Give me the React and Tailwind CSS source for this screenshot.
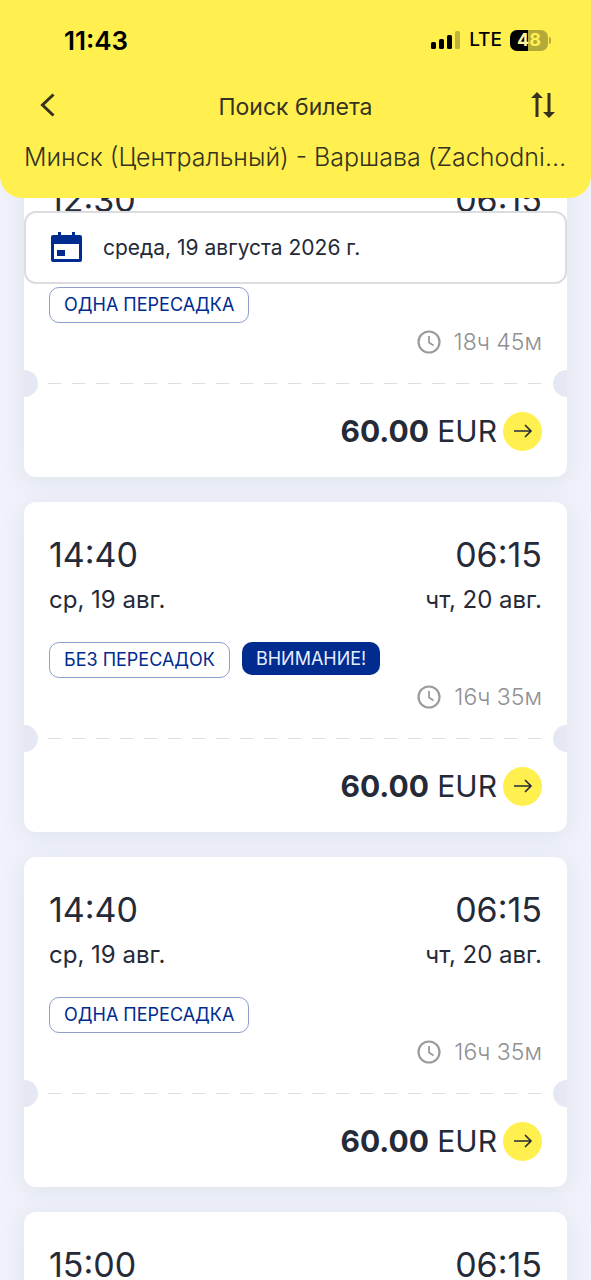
const TRIPS = [
  { id: 1, departure: '12:30', arrival: '06:15', transfer: 'ОДНА ПЕРЕСАДКА', duration: '18ч 45м' },
  { id: 2, departure: '14:40', arrival: '06:15', transfer: 'БЕЗ ПЕРЕСАДОК', warning: true, duration: '16ч 35м' },
  { id: 3, departure: '14:40', arrival: '06:15', transfer: 'ОДНА ПЕРЕСАДКА', duration: '16ч 35м' },
  { id: 4, departure: '15:00', arrival: '06:15', transfer: 'ОДНА ПЕРЕСАДКА', duration: '16ч 15м' },
]

function StatusBar() {
  return (
    <div className="flex h-10 items-center justify-between pr-10 pl-16 text-black">
      <span className="text-[26px] font-semibold">11:43</span>
      <div className="flex items-center gap-2">
        <svg className="h-5 w-[30px]" viewBox="0 0 30 20" fill="currentColor" aria-hidden="true">
          <rect x="0" y="12" width="5" height="7" rx="1.5" />
          <rect x="8" y="9" width="5" height="10" rx="1.5" />
          <rect x="16" y="5" width="5" height="14" rx="1.5" />
          <rect x="24" y="1" width="5" height="18" rx="1.5" opacity="0.25" />
        </svg>
        <span className="text-[19px] font-medium">LTE</span>
        <div className="flex items-center gap-px">
          <div className="flex h-[21px] w-[38px] items-center justify-center rounded-[7px] bg-linear-to-r from-black from-48% to-[#b4aa39] to-48% text-lg font-bold">
            <span className="text-[#fff1a0]">4</span>
            <span className="text-[#fff04f]">8</span>
          </div>
          <div className="h-[7px] w-[2px] rounded-r-full bg-[#b4aa39]" />
        </div>
      </div>
    </div>
  )
}

function Header() {
  return (
    <header className="relative z-20 shrink-0 rounded-b-[22px] bg-[#fff04f] pt-5 pb-[25px] text-[#35331f]">
      <StatusBar />
      <div className="mt-[25px] flex h-10 items-center justify-between px-9">
        <button type="button" aria-label="Назад" className="w-6">
          <svg className="size-6" viewBox="0 0 24 24" fill="none" stroke="currentColor" strokeWidth="3" aria-hidden="true">
            <path d="M17.5 1.5 6.5 12l11 10.5" />
          </svg>
        </button>
        <h1 className="pt-1 text-[23px]">Поиск билета</h1>
        <button type="button" aria-label="Поменять направление" className="w-6">
          <svg className="h-7 w-6" viewBox="0 0 24 28" fill="none" stroke="currentColor" strokeWidth="3" aria-hidden="true">
            <path d="M6 26V4M18 2v22" />
            <path d="M0 7 6 1l6 6zM12 21l6 6 6-6z" fill="currentColor" stroke="none" />
          </svg>
        </button>
      </div>
      <p className="mt-4 truncate px-6 text-[25px] leading-8 font-light">Минск (Центральный) - Варшава (Zachodnia)</p>
    </header>
  )
}

function DateButton() {
  return (
    <button
      type="button"
      className="absolute inset-x-6 top-[13px] z-10 flex h-[73px] items-center gap-[21px] rounded-xl border-2 border-[#dcdce0] bg-white px-[25px] text-left text-[21px]"
    >
      <svg className="h-8 w-[31px] shrink-0 text-[#002b8f]" viewBox="0 0 31 32" fill="currentColor" aria-hidden="true">
        <path
          fillRule="evenodd"
          d="M7 0h3v3h11V0h3v3h5a2 2 0 0 1 2 2v23a2 2 0 0 1-2 2H2a2 2 0 0 1-2-2V5a2 2 0 0 1 2-2h5zM3 12v15h25V12z"
        />
        <path d="M6 18h8v6H6z" />
      </svg>
      среда, 19 августа 2026 г.
    </button>
  )
}

function TripCard({ trip }) {
  return (
    <li className="rounded-xl bg-white pt-8 pb-[26px] shadow-[0_4px_24px_#dde4ec]">
      <div className="px-[25px]">
        <div className="flex justify-between text-[34px] leading-[42px]">
          <span>{trip.departure}</span>
          <span>{trip.arrival}</span>
        </div>
        <div className="mt-2 flex justify-between text-2xl leading-8">
          <span>ср, 19 авг.</span>
          <span>чт, 20 авг.</span>
        </div>
        <div className="mt-[26px] flex h-9 items-start gap-3 text-lg">
          <span className="flex h-9 items-center rounded-[10px] border border-[#8d9dce] px-[14px] text-[#002b8f]">
            {trip.transfer}
          </span>
          {trip.warning && (
            <span className="flex h-[33px] items-center rounded-[10px] bg-[#002b8f] px-[14px] text-[#e6edff]">
              ВНИМАНИЕ!
            </span>
          )}
        </div>
        <div className="mt-[3px] flex items-center justify-end gap-[13px] text-[23px] leading-8 font-light text-[#8f8f92]">
          <svg className="size-6" viewBox="0 0 24 24" fill="none" stroke="#9b9b9d" strokeWidth="2.2" aria-hidden="true">
            <circle cx="12" cy="12" r="10.5" />
            <path d="M12 6v6.5l4.5 3" strokeWidth="1.8" />
          </svg>
          {trip.duration}
        </div>
      </div>
      <div className="mt-3 flex h-[27px] items-center gap-[10px]">
        <div className="h-full w-[14px] rounded-r-full bg-[#e5e8f3]" />
        <div className="h-px flex-1 bg-[repeating-linear-gradient(90deg,#dedee2_0_13px,transparent_13px_24px)]" />
        <div className="h-full w-[14px] rounded-l-full bg-[#e5e8f3]" />
      </div>
      <div className="mt-[14px] flex h-10 items-center justify-end gap-[6px] px-[25px] text-[30px]">
        <span>
          <b className="font-bold">60.00</b> EUR
        </span>
        <button type="button" aria-label="Выбрать рейс" className="flex size-[39px] items-center justify-center rounded-full bg-[#fff04f]">
          <svg className="h-4 w-5" viewBox="0 0 20 16" fill="none" stroke="currentColor" strokeWidth="1.6" aria-hidden="true">
            <path d="M1 8h17M12 2l6 6-6 6" />
          </svg>
        </button>
      </div>
    </li>
  )
}

export default function App() {
  return (
    <div className="flex h-screen flex-col overflow-hidden bg-[#f0f1fa] font-[Inter,'Noto_Sans',sans-serif] text-[#252a38]">
      <Header />
      <main className="relative min-h-0 flex-1">
        <DateButton />
        {/* list is scrolled partly under the header */}
        <ul className="-mt-[51px] flex flex-col gap-[25px] px-6">
          {TRIPS.map((trip) => (
            <TripCard key={trip.id} trip={trip} />
          ))}
        </ul>
      </main>
    </div>
  )
}
